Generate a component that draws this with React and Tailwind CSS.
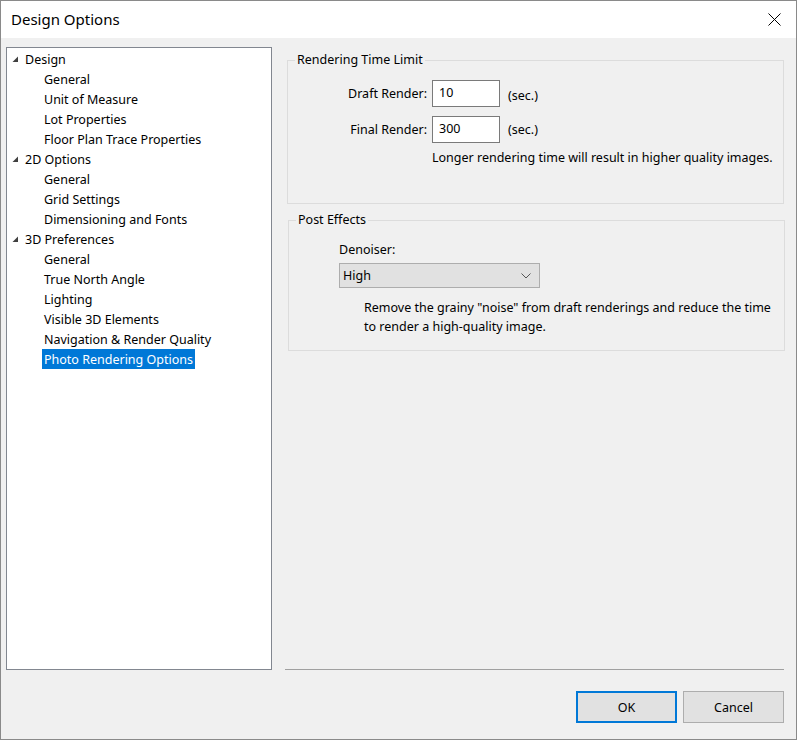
import React from 'react';

const tree = [
    { label: 'Design', children: ['General', 'Unit of Measure', 'Lot Properties', 'Floor Plan Trace Properties'] },
    { label: '2D Options', children: ['General', 'Grid Settings', 'Dimensioning and Fonts'] },
    {
        label: '3D Preferences',
        children: ['General', 'True North Angle', 'Lighting', 'Visible 3D Elements', 'Navigation & Render Quality', 'Photo Rendering Options'],
    },
];

const selected = 'Photo Rendering Options';

function Arrow() {
    return (
        <svg width="7" height="7" viewBox="0 0 7 7" className="block">
            <polygon points="6,0.5 6,6 0.5,6" fill="#404040" />
        </svg>
    );
}

function TreePanel() {
    return (
        <div className="ml-[5px] w-[266px] h-[623px] border border-[#828790] bg-white pt-[1px]">
            {tree.map((group) => (
                <div key={group.label}>
                    <div className="h-[20px] flex items-center">
                        <span className="w-[18px] pl-[5px] flex items-center">
                            <Arrow />
                        </span>
                        <span>{group.label}</span>
                    </div>
                    {group.children.map((child) => (
                        <div key={child} className="h-[20px] flex items-center pl-[35px]">
                            <span
                                className={
                                    child === selected && group.label === '3D Preferences'
                                        ? 'h-[20px] flex items-center px-[2px] bg-[#0078d7] text-white'
                                        : 'px-[2px]'
                                }
                            >
                                {child}
                            </span>
                        </div>
                    ))}
                </div>
            ))}
        </div>
    );
}

function TextBox({ value }) {
    return (
        <div className="w-[68px] h-[27px] border border-[#7a7a7a] bg-white pl-[6px] flex items-center pb-[3px]">
            {value}
        </div>
    );
}

export default function App() {
    return (
        <div className="w-[797px] h-[740px] border border-[#8a8a8a] bg-[#f0f0f0] flex flex-col font-['Noto_Sans','Open_Sans',sans-serif] text-[12.5px] text-black leading-[17px]">
            {/* title bar */}
            <div className="h-[37px] shrink-0 bg-white flex items-center justify-between pl-[10px] pr-[15px]">
                <span className="text-[15px]">Design Options</span>
                <svg width="13" height="13" viewBox="0 0 13 13">
                    <path d="M0.5 0.5 L12.5 12.5 M12.5 0.5 L0.5 12.5" stroke="#000" strokeWidth="1" />
                </svg>
            </div>

            <div className="flex pt-[9px]">
                <TreePanel />

                <div className="ml-[13px] w-[499px] h-[623px] flex flex-col">
                    <fieldset className="mt-[4px] ml-[2px] w-[497px] h-[153px] border border-[#dcdcdc]">
                        <legend className="ml-[7px] px-[2px] leading-[18px]">Rendering Time Limit</legend>
                        <div className="flex items-start mt-[11px]">
                            <span className="w-[144px] pr-[5px] text-right pt-[5px]">Draft Render:</span>
                            <TextBox value="10" />
                            <span className="ml-[8px] pt-[7px]">(sec.)</span>
                        </div>
                        <div className="flex items-start mt-[9px]">
                            <span className="w-[144px] pr-[5px] text-right pt-[5px]">Final Render:</span>
                            <TextBox value="300" />
                            <span className="ml-[8px] pt-[5px]">(sec.)</span>
                        </div>
                        <div className="ml-[144px] mt-[6px]">Longer rendering time will result in higher quality images.</div>
                    </fieldset>

                    <fieldset className="mt-[7px] ml-[3px] w-[497px] h-[140px] border border-[#dcdcdc]">
                        <legend className="ml-[7px] px-[2px] leading-[18px]">Post Effects</legend>
                        <div className="pl-[50px] mt-[12px]">Denoiser:</div>
                        <div className="ml-[50px] mt-[5px] w-[201px] h-[25px] border border-[#adadad] bg-[#e1e1e1] flex items-center justify-between pl-[3px] pr-[8px]">
                            <span>High</span>
                            <svg width="10" height="6" viewBox="0 0 10 6">
                                <path d="M0.5 0.5 L5 5 L9.5 0.5" fill="none" stroke="#555" strokeWidth="1" />
                            </svg>
                        </div>
                        <div className="pl-[75px] mt-[10px] leading-[19px]">
                            Remove the grainy "noise" from draft renderings and reduce the time
                            <br />
                            to render a high-quality image.
                        </div>
                    </fieldset>

                    <div className="mt-auto h-px bg-[#a0a0a0]" />
                </div>
            </div>

            {/* buttons */}
            <div className="flex justify-end gap-[6px] pr-[12px] pt-[21px]">
                <button className="w-[101px] h-[32px] border-2 border-[#0078d7] bg-[#e1e1e1]">OK</button>
                <button className="w-[101px] h-[32px] border border-[#adadad] bg-[#e1e1e1]">Cancel</button>
            </div>
        </div>
    );
}
